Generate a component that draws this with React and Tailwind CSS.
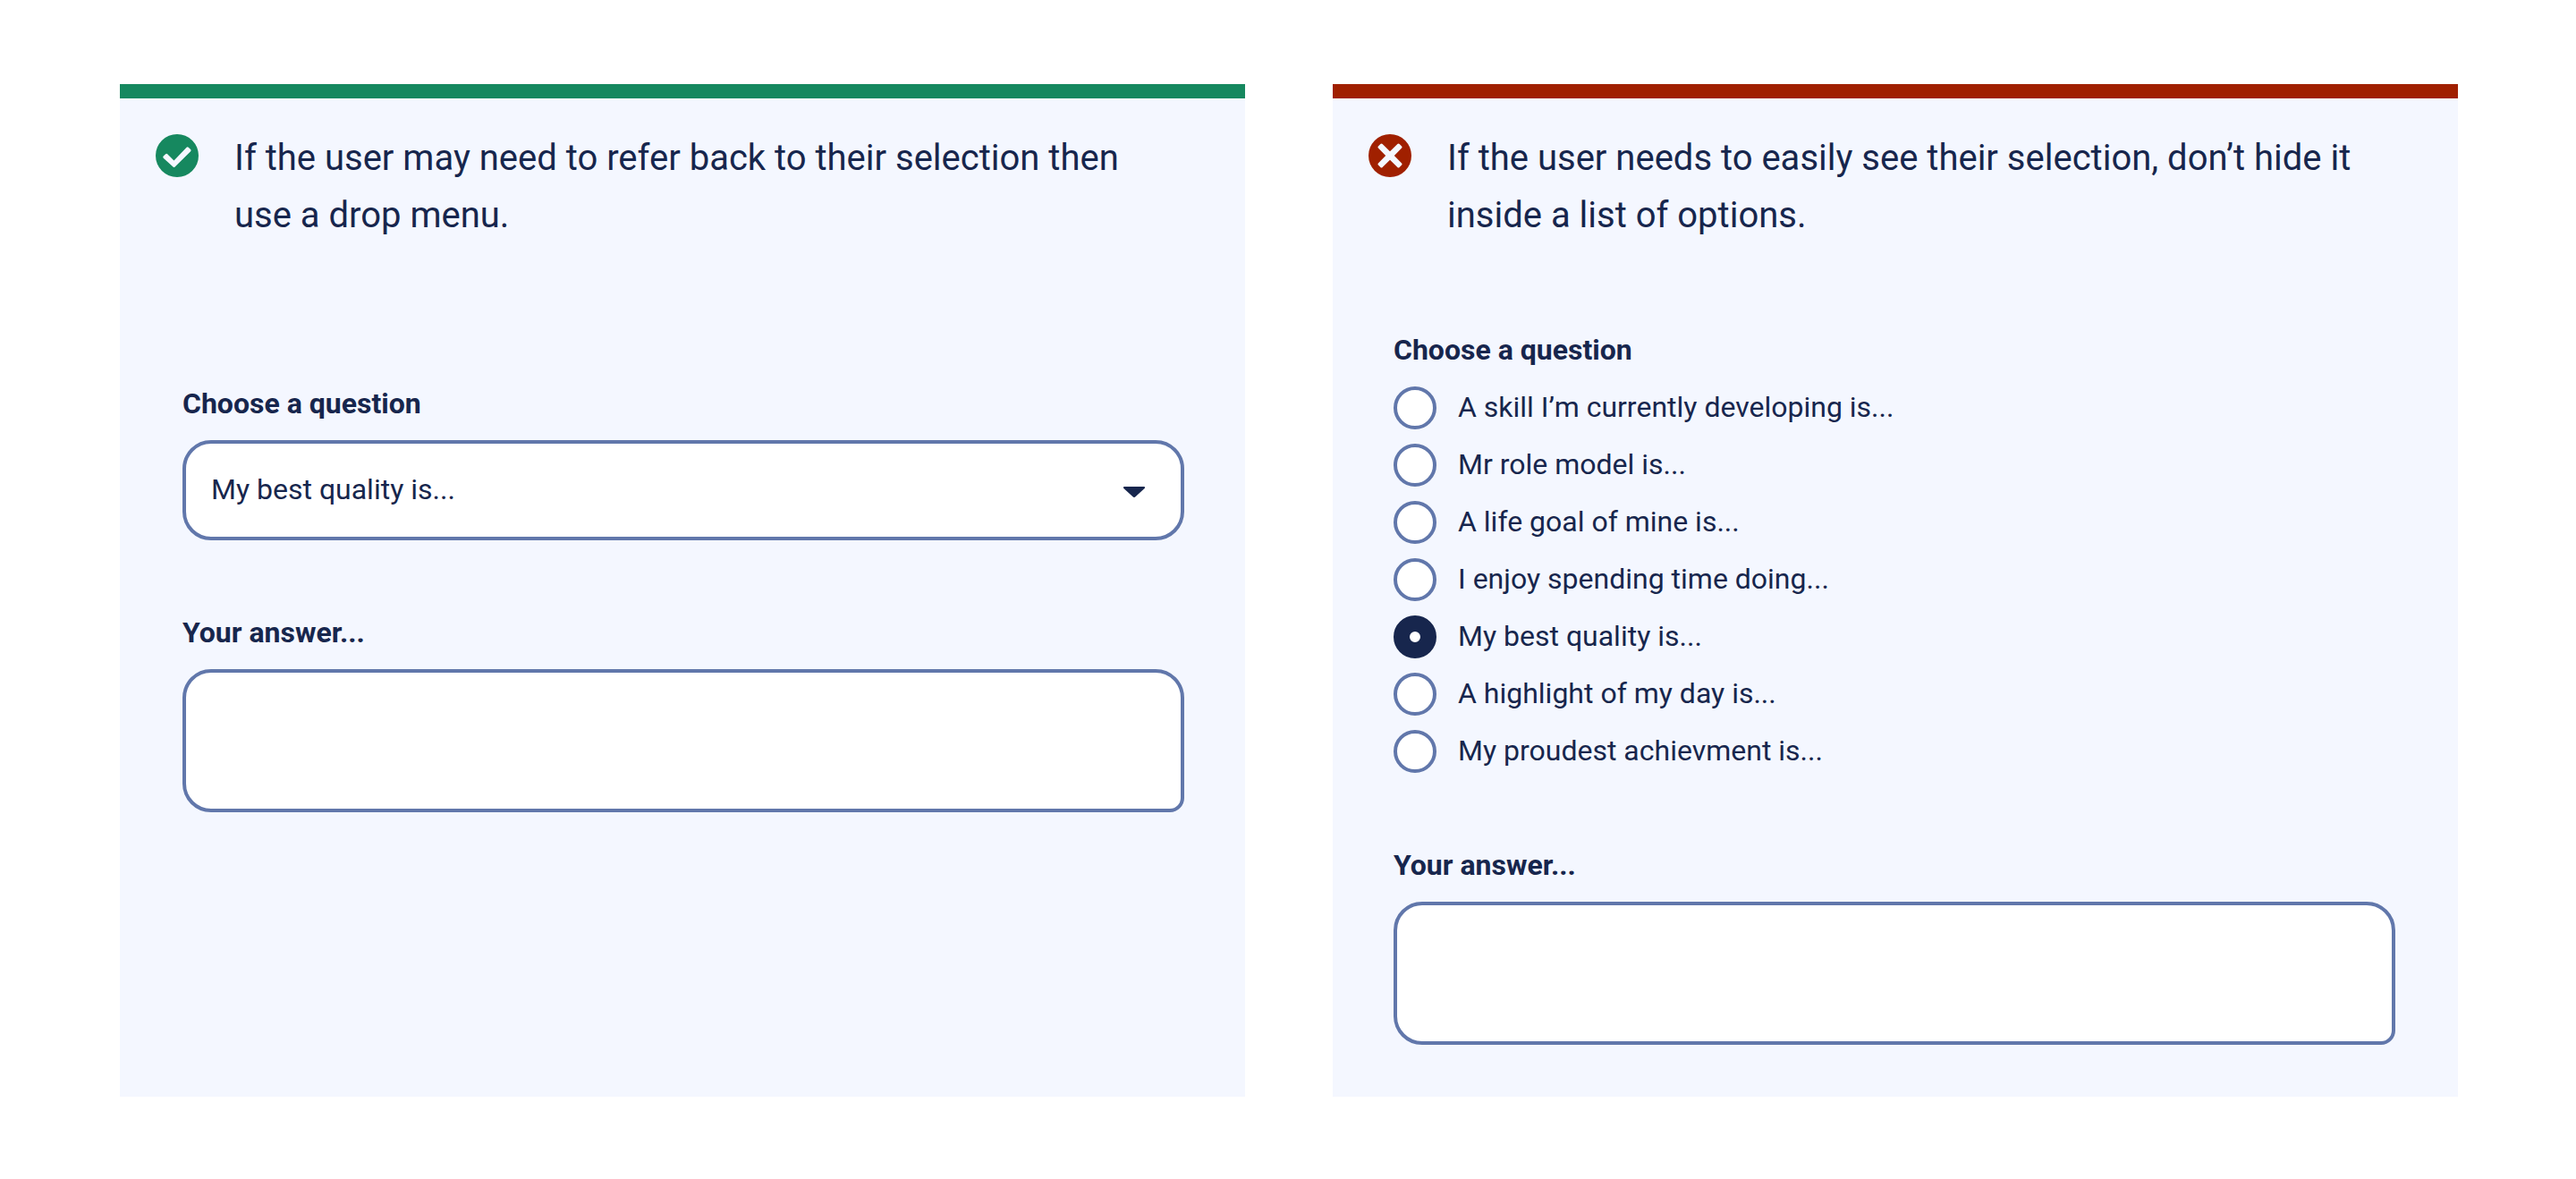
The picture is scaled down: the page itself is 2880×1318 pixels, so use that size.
import { useId } from "react";

const QUESTIONS = [
  "A skill I’m currently developing is...",
  "Mr role model is...",
  "A life goal of mine is...",
  "I enjoy spending time doing...",
  "My best quality is...",
  "A highlight of my day is...",
  "My proudest achievment is...",
];

const SELECTED = "My best quality is...";

function CheckIcon() {
  return (
    <svg viewBox="0 0 48 48" className="mt-[5px] size-12 shrink-0" aria-hidden="true">
      <circle cx="24" cy="24" r="24" fill="#16885f" />
      <path
        d="M8.7 26.7a1.5 1.5 0 0 1 0-2.1l2.4-2.3a1.5 1.5 0 0 1 2.1 0l7.3 7.2L34.6 14.7a1.5 1.5 0 0 1 2.1 0l2.4 2.4a1.5 1.5 0 0 1 0 2.1L21.6 36.6a1.5 1.5 0 0 1-2.1 0Z"
        fill="#f4f7ff"
      />
    </svg>
  );
}

function CrossIcon() {
  return (
    <svg viewBox="0 0 48 48" className="mt-[5px] size-12 shrink-0" aria-hidden="true">
      <circle cx="24" cy="24" r="24" fill="#a02000" />
      <path
        d="M13.4 10.9a1.6 1.6 0 0 1 2.2 0L24 19.2l8.4-8.3a1.6 1.6 0 0 1 2.2 0l2.5 2.5a1.6 1.6 0 0 1 0 2.2L28.8 24l8.3 8.4a1.6 1.6 0 0 1 0 2.2l-2.5 2.5a1.6 1.6 0 0 1-2.2 0L24 28.8l-8.4 8.3a1.6 1.6 0 0 1-2.2 0l-2.5-2.5a1.6 1.6 0 0 1 0-2.2l8.3-8.4-8.3-8.4a1.6 1.6 0 0 1 0-2.2Z"
        fill="#f4f7ff"
      />
    </svg>
  );
}

function Heading({ icon, children }) {
  return (
    <header className="flex items-start gap-10 px-10">
      {icon}
      <p className="max-w-[1020px] text-[40px] leading-[64px]">{children}</p>
    </header>
  );
}

function Answer() {
  const id = useId();
  return (
    <div className="mt-20 flex flex-col gap-[18px]">
      <label htmlFor={id} className="text-[32px] leading-[46px] font-bold">
        Your answer...
      </label>
      <textarea
        id={id}
        className="block h-40 w-full resize-none rounded-[32px] rounded-br-2xl border-4 border-[#6177ab] bg-white px-7 py-6 text-[32px] leading-[46px]"
      />
    </div>
  );
}

function DropMenu() {
  const id = useId();
  return (
    <div className="flex flex-col gap-[18px]">
      <label htmlFor={id} className="text-[32px] leading-[46px] font-bold">
        Choose a question
      </label>
      <div className="relative">
        <select
          id={id}
          defaultValue={SELECTED}
          className="block h-28 w-full appearance-none rounded-[32px] border-4 border-[#6177ab] bg-white pr-20 pb-0.5 pl-7 text-[32px] leading-[46px]"
        >
          {QUESTIONS.map((q) => (
            <option key={q}>{q}</option>
          ))}
        </select>
        <svg
          viewBox="0 0 24 12"
          className="pointer-events-none absolute top-[52px] right-11 h-3 w-6"
          aria-hidden="true"
        >
          <path
            d="M1.2 0h21.6a1.1 1.1 0 0 1 .8 2L13.2 11.5a1.8 1.8 0 0 1-2.4 0L.4 2A1.1 1.1 0 0 1 1.2 0Z"
            fill="#17264d"
          />
        </svg>
      </div>
    </div>
  );
}

function RadioList() {
  return (
    <fieldset>
      <legend className="text-[32px] leading-[46px] font-bold">Choose a question</legend>
      <div className="mt-[18px] flex flex-col gap-4">
        {QUESTIONS.map((q) => (
          <label key={q} className="flex items-start gap-6 text-[32px] leading-[46px]">
            <input
              type="radio"
              name="question"
              defaultChecked={q === SELECTED}
              className="size-12 shrink-0 appearance-none rounded-full border-4 border-[#6177ab] bg-white checked:border-[18px] checked:border-[#17264d]"
            />
            {q}
          </label>
        ))}
      </div>
    </fieldset>
  );
}

export default function App() {
  return (
    <main className="grid grid-cols-2 gap-[98px] bg-white pt-[94px] pr-[132px] pb-[92px] pl-[134px] font-[Roboto,sans-serif] text-[#17264d]">
      <section className="border-t-16 border-[#16885f] bg-[#f4f7ff] pt-[35px] pb-[58px]">
        <Heading icon={<CheckIcon />}>
          If the user may need to refer back to their selection then use a drop menu.
        </Heading>
        <form className="mt-[155px] pr-[68px] pl-[70px]">
          <DropMenu />
          <Answer />
        </form>
      </section>
      <section className="border-t-16 border-[#a02000] bg-[#f4f7ff] pt-[35px] pb-[58px]">
        <Heading icon={<CrossIcon />}>
          If the user needs to easily see their selection, don’t hide it inside a list of options.
        </Heading>
        <form className="mt-[95px] pr-[70px] pl-[68px]">
          <RadioList />
          <Answer />
        </form>
      </section>
    </main>
  );
}
